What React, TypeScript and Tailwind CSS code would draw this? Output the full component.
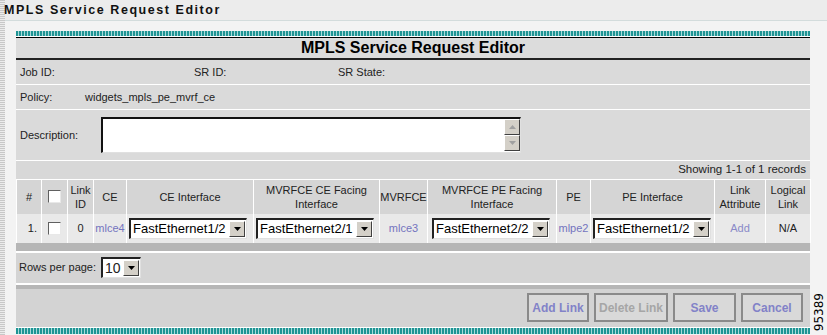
import React from 'react';

const Arrow = ({ disabled = false, up = false }: { disabled?: boolean; up?: boolean }) => (
  <div className="w-[16px] h-[16px] shrink-0 bg-[#d4d0c8] border border-t-white border-l-white border-r-[#404040] border-b-[#404040] flex items-center justify-center">
    <svg width="7" height="4" viewBox="0 0 7 4">
      <path d={up ? 'M0 4 L3.5 0 L7 4 Z' : 'M0 0 L7 0 L3.5 4 Z'} fill={disabled ? '#a0a0a0' : '#000'} />
    </svg>
  </div>
);

const Select = ({ value, width }: { value: string; width: string }) => (
  <div className={`${width} h-[21px] bg-white border-t-2 border-l-2 border-t-[#222] border-l-[#222] border-r border-b border-r-[#e0e0e0] border-b-[#e0e0e0] flex items-center justify-between pl-[2px] pr-[1px]`}>
    <span className="text-[13px] leading-none text-black whitespace-nowrap">{value}</span>
    <Arrow />
  </div>
);

const Checkbox = () => (
  <div className="w-[13px] h-[13px] bg-white border border-t-[#606060] border-l-[#606060] border-r-[#e8e8e8] border-b-[#e8e8e8] mx-auto" />
);

const Btn = ({ label, w, disabled = false }: { label: string; w: string; disabled?: boolean }) => (
  <button className={`${w} h-[29px] bg-[#d9d9d9] border-2 border-[#8a8a8a] text-[12px] font-bold ${disabled ? 'text-[#a6a6a6]' : 'text-[#8282c8]'}`}>
    {label}
  </button>
);

const headers = [
  { t: '#', w: 'w-[25px]' },
  { t: 'cb', w: 'w-[26px]' },
  { t: 'Link\nID', w: 'w-[26px]' },
  { t: 'CE', w: 'w-[33px]' },
  { t: 'CE Interface', w: 'w-[127px]' },
  { t: 'MVRFCE CE Facing\nInterface', w: 'w-[126px]' },
  { t: 'MVRFCE', w: 'w-[48px]' },
  { t: 'MVRFCE PE Facing\nInterface', w: 'w-[129px]' },
  { t: 'PE', w: 'w-[34px]' },
  { t: 'PE Interface', w: 'w-[124px]' },
  { t: 'Link\nAttribute', w: 'w-[51px]' },
  { t: 'Logical\nLink', w: 'w-[45px]' },
];

export default function App() {
  return (
    <div className="w-[827px] h-[335px] overflow-hidden bg-[#f3f3f3] flex font-['Liberation_Sans',Arial,sans-serif] text-[11px] text-[#222]">
      {/* dotted left edge */}
      <div className="w-[5px] h-full bg-[repeating-linear-gradient(0deg,#c8c8c8_0px,#c8c8c8_1px,#ececec_1px,#ececec_2px)]" />
      <div className="flex-1 flex flex-col">
        <div className="h-[21px] bg-[#ececec] border-b border-[#d3dcdc] flex items-center">
          <span className="text-[12.5px] font-bold tracking-[1.55px] text-[#111] -ml-[1px]">MPLS Service Request Editor</span>
        </div>
        <div className="flex flex-1">
          <div className="w-[11px]" />
          <div className="w-[794px] flex flex-col pt-[10px]">
            <div className="h-[5px] bg-[repeating-linear-gradient(90deg,#1f9494_0px,#1f9494_2px,#a9d9d9_2px,#a9d9d9_3px)]" />
            <div className="h-[1px] bg-white" />
            <div className="h-[23px] bg-[#dcdcdc] border-t border-b-2 border-t-black border-b-[#222] flex items-center justify-center">
              <span className="text-[16px] font-bold text-black">MPLS Service Request Editor</span>
            </div>
            <div className="h-[25px] bg-[#dadada] border-b border-white flex items-center text-[11px]">
              <span className="w-[178px] pl-[4px]">Job ID:</span>
              <span className="w-[144px]">SR ID:</span>
              <span>SR State:</span>
            </div>
            <div className="h-[25px] bg-[#dadada] border-b border-white flex items-center">
              <span className="w-[69px] pl-[4px]">Policy:</span>
              <span>widgets_mpls_pe_mvrf_ce</span>
            </div>
            <div className="h-[51px] bg-[#dadada] border-b border-white flex items-center">
              <span className="w-[85px] pl-[4px]">Description:</span>
              <div className="w-[420px] h-[36px] bg-white border-t-2 border-l-2 border-t-[#111] border-l-[#111] border-r border-b border-r-[#e0e0e0] border-b-[#e0e0e0] flex justify-end">
                <div className="flex flex-col">
                  <Arrow up disabled />
                  <Arrow disabled />
                </div>
              </div>
            </div>
            <div className="h-[18px] bg-[#d8d8d8] flex items-center justify-end pr-[4px] text-[11.5px]">
              Showing 1-1 of 1 records
            </div>
            <table className="border-collapse table-fixed w-[794px]">
              <thead>
                <tr className="h-[34px] bg-[#d5d5d5]">
                  {headers.map((h, i) => (
                    <th key={i} className={`${h.w} border-x border-t border-white font-normal text-[11px] leading-[14px] text-center whitespace-pre-line p-0`}>
                      {h.t === 'cb' ? <Checkbox /> : h.t}
                    </th>
                  ))}
                </tr>
              </thead>
              <tbody>
                <tr className="h-[29px] bg-[#e9e9e9]">
                  <td className="border-x border-white text-right pr-[4px]">1.</td>
                  <td className="border-x border-white"><Checkbox /></td>
                  <td className="border-x border-white text-center">0</td>
                  <td className="border-x border-white text-center text-[#7474bf]">mlce4</td>
                  <td className="border-x border-white px-[2px]"><Select value="FastEthernet1/2" width="w-[118px]" /></td>
                  <td className="border-x border-white px-[2px]"><Select value="FastEthernet2/1" width="w-[118px]" /></td>
                  <td className="border-x border-white text-center text-[#7474bf]">mlce3</td>
                  <td className="border-x border-white px-[4px]"><Select value="FastEthernet2/2" width="w-[118px]" /></td>
                  <td className="border-x border-white text-center text-[#7474bf]">mlpe2</td>
                  <td className="border-x border-white px-[2px]"><Select value="FastEthernet1/2" width="w-[118px]" /></td>
                  <td className="border-x border-white text-center text-[#8a8ac8]">Add</td>
                  <td className="border-x border-white text-center">N/A</td>
                </tr>
              </tbody>
            </table>
            <div className="h-[8px] bg-[#b6b6b6]" />
            <div className="h-[2px] bg-white" />
            <div className="h-[30px] bg-[#d4d4d4] flex items-center pl-[3px] gap-[5px] text-[11px]">
              <span>Rows per page:</span>
              <div className="w-[40px] h-[21px] bg-white border-t-2 border-l-2 border-t-[#222] border-l-[#222] border-r border-b border-r-[#e0e0e0] border-b-[#e0e0e0] flex items-center justify-between pl-[2px] pr-[1px]">
                <span className="text-[14px] leading-none">10</span>
                <Arrow />
              </div>
            </div>
            <div className="h-[2px] bg-white" />
            <div className="h-[4px] bg-[#b6b6b6]" />
            <div className="h-[38px] bg-[#d3d3d3] flex items-center justify-end gap-[5px] pr-[7px]">
              <Btn label="Add Link" w="w-[62px]" />
              <Btn label="Delete Link" w="w-[74px]" disabled />
              <Btn label="Save" w="w-[63px]" />
              <Btn label="Cancel" w="w-[62px]" />
            </div>
            <div className="h-[1px] bg-white" />
            <div className="h-[6px] bg-[repeating-linear-gradient(90deg,#1f9494_0px,#1f9494_2px,#a9d9d9_2px,#a9d9d9_3px)]" />
          </div>
          <div className="flex-1 flex items-end justify-center pb-[4px]">
            <span className="[writing-mode:vertical-rl] rotate-180 text-[12px] text-black font-['DejaVu_Sans',sans-serif] leading-none">95389</span>
          </div>
        </div>
      </div>
    </div>
  );
}
